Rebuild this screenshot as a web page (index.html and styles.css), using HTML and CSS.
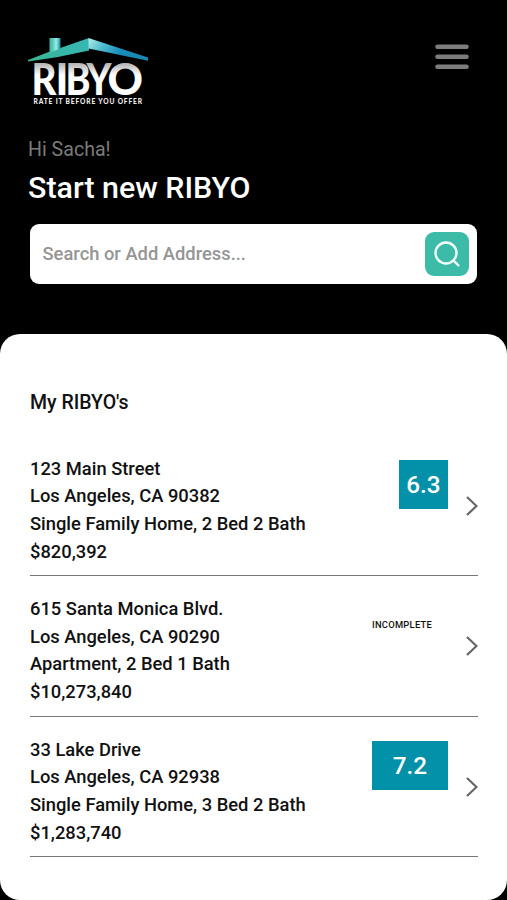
FILE: index.html
```html
<!DOCTYPE html>
<html lang="en">
<head>
<meta charset="utf-8">
<title>RIBYO</title>
<link rel="stylesheet" href="styles.css">
</head>
<body>
<header class="top">
  <div class="bar">
    <svg class="logo" width="124" height="72" viewBox="26 34 124 72" role="img" aria-label="RIBYO">
      <defs>
        <linearGradient id="roof" x1="0" x2="1" y1="0" y2="0"><stop offset="0" stop-color="#35b795"/><stop offset="1" stop-color="#37b7b4"/></linearGradient>
        <linearGradient id="slope" x1="0" x2="1" y1="0" y2="0.3"><stop offset="0" stop-color="#b0f0ea"/><stop offset="0.3" stop-color="#55bed0"/><stop offset="0.65" stop-color="#168fbd"/><stop offset="1" stop-color="#1a86b4"/></linearGradient>
        <linearGradient id="chimney" x1="0" x2="1" y1="0" y2="0"><stop offset="0" stop-color="#36b8a0"/><stop offset="0.4" stop-color="#65d2c8"/><stop offset="0.6" stop-color="#a0eee5"/><stop offset="1" stop-color="#168d98"/></linearGradient>
        <linearGradient id="word" x1="0" x2="0" y1="62" y2="95" gradientUnits="userSpaceOnUse"><stop offset="0" stop-color="#aaa"/><stop offset="0.4" stop-color="#fff"/></linearGradient>
      </defs>
      <path fill="url(#roof)" d="M28 60L50 51.500L89 38V50.500L58 57L28 61.500Z"/>
      <path fill="url(#slope)" d="M88.500 38L148 57.500V60.700L88.500 48.500Z"/>
      <path fill="url(#chimney)" d="M49.500 38H60.500V48.500L49.500 53Z"/>
      <text class="word" y="95" fill="url(#word)"><tspan x="31.500" textLength="25" lengthAdjust="spacingAndGlyphs">R</tspan><tspan x="55.500" textLength="13" lengthAdjust="spacingAndGlyphs">I</tspan><tspan x="65.500" textLength="25" lengthAdjust="spacingAndGlyphs">B</tspan><tspan x="86.500" textLength="25" lengthAdjust="spacingAndGlyphs">Y</tspan><tspan x="107.500" textLength="35.500" lengthAdjust="spacingAndGlyphs">O</tspan></text>
      <text class="tag" x="33.500" y="103.800" textLength="108.500">RATE IT BEFORE YOU OFFER</text>
    </svg>
    <svg class="menu" width="34" height="27" viewBox="0 0 34 27" aria-label="Menu"><path d="M2.500 2.800H31.500M2.500 12.800H31.500M2.500 22.800H31.500"/></svg>
  </div>
  <p class="hello">Hi Sacha!</p>
  <h1 class="title">Start new RIBYO</h1>
  <div class="search">
    <span class="hint">Search or Add Address...</span>
    <div class="go"><svg width="28" height="28" viewBox="0 0 28 28"><circle cx="13" cy="13" r="10.500"/><path d="M20.500 20.500L26 26"/></svg></div>
  </div>
</header>
<main class="panel">
  <h2 class="heading">My RIBYO's</h2>
  <section class="row">
    <div class="info"><p>123 Main Street</p><p>Los Angeles, CA 90382</p><p>Single Family Home, 2 Bed 2 Bath</p><p>$820,392</p></div>
    <div class="score">6.3</div>
    <svg class="arrow" width="12" height="22" viewBox="0 0 12 22"><path d="M1 2L10.500 11L1 20"/></svg>
  </section>
  <section class="row">
    <div class="info"><p>615 Santa Monica Blvd.</p><p>Los Angeles, CA 90290</p><p>Apartment, 2 Bed 1 Bath</p><p>$10,273,840</p></div>
    <div class="status">INCOMPLETE</div>
    <svg class="arrow" width="12" height="22" viewBox="0 0 12 22"><path d="M1 2L10.500 11L1 20"/></svg>
  </section>
  <section class="row">
    <div class="info"><p>33 Lake Drive</p><p>Los Angeles, CA 92938</p><p>Single Family Home, 3 Bed 2 Bath</p><p>$1,283,740</p></div>
    <div class="score wide">7.2</div>
    <svg class="arrow" width="12" height="22" viewBox="0 0 12 22"><path d="M1 2L10.500 11L1 20"/></svg>
  </section>
</main>
</body>
</html>
```
FILE: styles.css
```css
* { box-sizing: border-box; margin: 0; padding: 0; }
body { height: 900px; overflow: hidden; display: flex; flex-direction: column; background: #000; font-family: Roboto, sans-serif; font-weight: 500; color: #111; }
.top { height: 334px; flex: none; padding: 34px 30px 0 28px; }
.bar { display: flex; justify-content: space-between; align-items: flex-start; height: 102px; margin-left: -2px; }
.logo { display: block; overflow: visible; }
.word { font-family: Lato, sans-serif; font-weight: 900; font-size: 43.5px; }
.tag { font-family: Lato, sans-serif; font-weight: 900; font-size: 6.6px; fill: #eee; }
.menu { margin: 10px 8px 0 0; fill: none; stroke: #7d7d7d; stroke-width: 4.6; stroke-linecap: round; }
.hello { font-weight: 400; font-size: 19.6px; line-height: 27px; color: #7b7b7b; }
.title { margin-top: 7px; font-weight: 500; font-size: 30.4px; line-height: 35px; color: #fff; }
.search { display: flex; justify-content: space-between; align-items: center; height: 60px; margin: 19px 0 0 2px; padding: 0 8px 0 12.5px; background: #fff; border-radius: 9px; }
.hint { padding-bottom: 1px; font-size: 18.35px; color: #959595; }
.go { display: flex; align-items: center; justify-content: center; width: 44px; height: 44px; border-radius: 9px; background: #3dbba9; }
.go svg { fill: none; stroke: #f0fffc; stroke-width: 2.4; }
.panel { flex: none; height: 566px; padding: 55px 29px 0 30px; background: #fff; border-radius: 20px; }
.heading { height: 46.5px; font-weight: 500; font-size: 19.5px; line-height: 27px; }
.row { display: flex; align-items: flex-start; height: 140.5px; padding-top: 19px; border-bottom: 1.5px solid #777; }
.info { flex: 1; font-size: 18.33px; line-height: 27.7px; white-space: nowrap; }
.score { width: 49px; height: 49px; margin-top: 5px; background: #0291a9; color: #fff; font-size: 24.3px; line-height: 50px; text-align: center; }
.wide { width: 76px; }
.status { width: 76px; margin-top: 24px; font-size: 9.4px; letter-spacing: 0.25px; line-height: 12px; }
.arrow { margin: 40px 0 0 18px; fill: none; stroke: #666; stroke-width: 2.2; }
```
